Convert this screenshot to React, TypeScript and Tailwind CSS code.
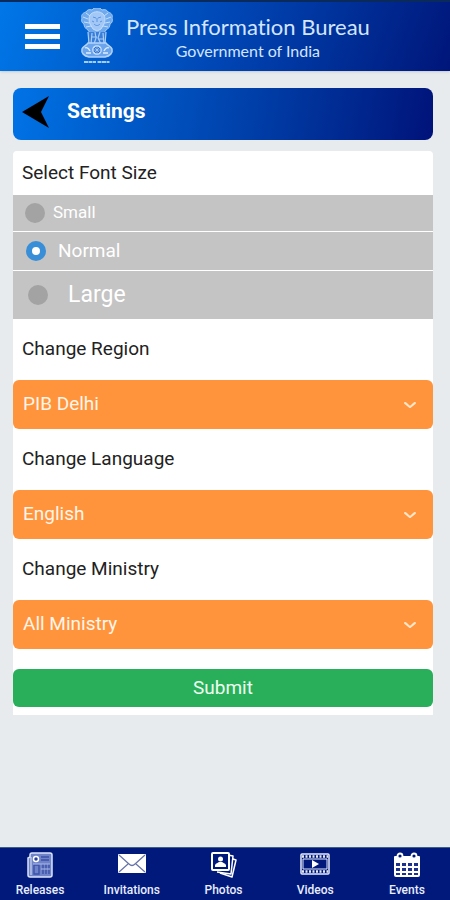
import React, { useState } from 'react';

const FONT_SIZES = [
  { id: 'small', label: 'Small', row: 'h-9 pl-3 gap-2 text-[17px]' },
  { id: 'normal', label: 'Normal', row: 'h-[38px] pl-[13px] gap-3 text-[19px]' },
  { id: 'large', label: 'Large', row: 'h-12 pl-[15px] gap-5 text-[23px]' },
];

const Emblem: React.FC = () => (
  <svg width="34" height="58" viewBox="0 0 34 58" fill="none" aria-hidden="true">
    {/* lions */}
    <path
      d="M12 2c2-3 8-3 10 0 3-1 5 0 6 2 4 1 5 4 4 6 1 3 0 5-2 6 0 3-2 5-4 6l-2 3H10l-2-3c-2-1-4-3-4-6-2-1-3-3-2-6-1-2 0-5 4-6 1-2 3-3 6-2z"
      fill="#6fa9ee"
      stroke="#a5cbf7"
      strokeWidth="1"
    />
    <path
      d="M11 6c3-3 9-3 12 0 3 3 2 7 1 10l-3 5-4 2-4-2-3-5c-1-3-2-7 1-10z"
      fill="#a3c8f6"
      stroke="#c5defb"
      strokeWidth="1"
    />
    <path
      d="M13 9l3 1M21 9l-3 1M17 10v4M14 16c2 2 4 2 6 0M12 13l2 1M22 13l-2 1"
      stroke="#5893e2"
      strokeWidth="1"
    />
    <path
      d="M3 9l5 2M31 9l-5 2M4 14l5 1M30 14l-5 1M6 19l5-1M28 19l-5-1M6 5l4 3M28 5l-4 3"
      stroke="#c5defb"
      strokeWidth="1"
    />
    {/* legs */}
    <path d="M8 24h18v11l2 3H6l2-3z" fill="#397fda" />
    <path
      d="M8 24l1 12M12 25l-1 11M15 24l1 6-2 6M20 24l-2 6 3 6M23 25l1 11M26 24l-1 12M11 29h6M18 31h6"
      stroke="#a9cdf8"
      strokeWidth="1.2"
    />
    {/* abacus with the wheel */}
    <path
      d="M8 35h18c1 2 5 3 6 6 1 4-2 7-7 8H9c-5-1-8-4-7-8 1-3 5-4 6-6z"
      fill="#6ba5ee"
      stroke="#b4d4fa"
      strokeWidth="1.5"
    />
    <circle cx="17" cy="42" r="4.2" fill="#2f72d2" stroke="#d5e7fd" strokeWidth="1.2" />
    <path d="M17 38v8M13 42h8M14 39l6 6M20 39l-6 6" stroke="#c5defb" strokeWidth=".6" />
    <path d="M5 40c2-1 4 1 5 3M29 40c-2-1-4 1-5 3M6 45h5M23 45h5" stroke="#e0edfd" strokeWidth="1.3" />
    <path d="M4 54h26" stroke="#a5cbf7" strokeWidth="2" strokeDasharray="4 .5 4 .5 3 1.5" />
  </svg>
);

const ReleasesIcon: React.FC = () => (
  <svg width="26" height="26" viewBox="0 0 26 26" fill="none" aria-hidden="true">
    <path d="M5 1h18a2 2 0 0 1 2 2v20a2 2 0 0 1-2 2H3a2 2 0 0 1-2-2V6l2-1V3a2 2 0 0 1 2-2z" fill="#6f83c8" stroke="#dce4fa" strokeWidth="1.5" />
    <path d="M4 5v18" stroke="#dce4fa" strokeWidth="1" />
    <circle cx="9" cy="7" r="2.5" fill="#2a409c" stroke="#fff" strokeWidth="1.5" />
    <path d="M14 5h8M14 8h8" stroke="#3d52a8" strokeWidth="1.4" />
    <path d="M7 13h5v9H7zM16 12v10M19 12v10M22 12v10" stroke="#3d52a8" strokeWidth="1.4" />
    <path d="M6 12h17M14 17h9" stroke="#aebbe8" strokeWidth="1" />
  </svg>
);

const InvitationsIcon: React.FC = () => (
  <svg width="28" height="26" viewBox="0 0 28 26" fill="none" aria-hidden="true">
    <rect y="2" width="28" height="19" rx="1" fill="#fff" />
    <path d="M1 3l10 9c2 2 4 2 6 0l10-9M1 20l9-8M27 20l-9-8" stroke="#6672a8" strokeWidth="1.2" />
  </svg>
);

const PhotosIcon: React.FC = () => (
  <svg width="26" height="26" viewBox="0 0 26 26" fill="none" aria-hidden="true">
    <path d="M19 6l6 2-4 17-12-4" fill="#00197b" stroke="#fff" strokeWidth="1.5" strokeLinejoin="round" />
    <path d="M17 3l5 1-2 18-14-2" fill="#00197b" stroke="#fff" strokeWidth="1.5" strokeLinejoin="round" />
    <rect x="1" y="1" width="17" height="17" rx="1" fill="#00197b" stroke="#fff" strokeWidth="2" />
    <circle cx="9.5" cy="7" r="2.5" fill="#fff" />
    <path d="M4 15v-2c1-2 3-2 4-3h3c1 1 3 1 4 3v2z" fill="#fff" />
  </svg>
);

const VideosIcon: React.FC = () => (
  <svg width="30" height="26" viewBox="0 0 30 26" fill="none" aria-hidden="true">
    <rect x="1" y="2" width="28" height="20" rx="1" fill="#00197b" stroke="#e6ebfb" strokeWidth="1.5" />
    <path d="M2 4.5h26M2 19.5h26" stroke="#e6ebfb" strokeWidth="2.5" strokeDasharray="2 1.5" />
    <path d="M3 7h24v10H3z" stroke="#e6ebfb" strokeWidth="1" />
    <path d="M12 8l7 4-7 4z" fill="#fff" />
  </svg>
);

const EventsIcon: React.FC = () => (
  <svg width="28" height="26" viewBox="0 0 28 26" fill="none" aria-hidden="true">
    <path d="M2 4h24a1 1 0 0 1 1 1v18a2 2 0 0 1-2 2H3a2 2 0 0 1-2-2V5a1 1 0 0 1 1-1z" fill="#fff" />
    <path
      d="M3 11h4v3H3zM9 11h4v3H9zM15 11h4v3h-4zM21 11h4v3h-4zM3 16h4v3H3zM9 16h4v3H9zM15 16h4v3h-4zM21 16h4v3h-4zM3 21h4v2H3zM9 21h4v2H9zM15 21h4v2h-4zM21 21h4v2h-4z"
      fill="#1d318f"
    />
    <circle cx="7" cy="4" r="2.5" fill="#00197b" stroke="#fff" strokeWidth="1.8" />
    <circle cx="21" cy="4" r="2.5" fill="#00197b" stroke="#fff" strokeWidth="1.8" />
  </svg>
);

const NAV_ITEMS = [
  { label: 'Releases', icon: <ReleasesIcon /> },
  { label: 'Invitations', icon: <InvitationsIcon /> },
  { label: 'Photos', icon: <PhotosIcon /> },
  { label: 'Videos', icon: <VideosIcon /> },
  { label: 'Events', icon: <EventsIcon /> },
];

interface SelectFieldProps {
  id: string;
  label: string;
  options: string[];
}

const SelectField: React.FC<SelectFieldProps> = ({ id, label, options }) => (
  <div>
    <label htmlFor={id} className="flex h-[61px] items-center px-[9px] text-[19px] text-[#222]">
      {label}
    </label>
    <div className="relative">
      <select
        id={id}
        className="block h-[49px] w-full appearance-none rounded-md bg-[#ff943c] pl-2.5 pr-10 text-[19px] text-[#fff5e8] outline-none"
      >
        {options.map((option) => (
          <option key={option}>{option}</option>
        ))}
      </select>
      <svg
        className="pointer-events-none absolute right-4 top-5"
        width="14"
        height="10"
        viewBox="0 0 14 10"
        fill="none"
        aria-hidden="true"
      >
        <path d="M2 3c2 1 3 3 5 4 2-1 3-3 5-4" stroke="#ffe6c8" strokeWidth="2" strokeLinecap="round" />
      </svg>
    </div>
  </div>
);

const App: React.FC = () => {
  const [fontSize, setFontSize] = useState('normal');

  return (
    <div className="flex min-h-screen flex-col bg-[#e7ebee] font-['Roboto',sans-serif]">
      {/* HEADER */}
      <header className="flex h-[71px] items-center border-t-2 border-[#0b2a5c] bg-linear-110 from-[#0077e8] via-[#0046b5] to-[#00157a] pl-[25px] shadow-sm">
        <button aria-label="Menu" className="flex flex-col gap-[5px]">
          <span className="h-[5px] w-[35px] bg-white" />
          <span className="h-[5px] w-[35px] bg-white" />
          <span className="h-[5px] w-[35px] bg-white" />
        </button>
        <div className="ml-5">
          <Emblem />
        </div>
        <div className="ml-3 pt-1 text-center font-['Lato',sans-serif] text-[#d3e5ff] [font-variant-ligatures:none]">
          <h1 className="text-[22px] leading-6">Press Information Bureau</h1>
          <p className="text-base leading-6">Government of India</p>
        </div>
      </header>

      <main className="flex-1 pl-[13px] pr-[17px] pt-[17px]">
        {/* TITLE BAR */}
        <div className="flex h-[52px] items-center rounded-lg bg-linear-100 from-[#0073e6] via-[#0045b0] to-[#00127a] pb-1 pl-2">
          <button aria-label="Back">
            <svg width="28" height="32" viewBox="0 0 28 32" aria-hidden="true">
              <path d="M1 16L28 0l-8 16 8 16z" fill="#000" />
            </svg>
          </button>
          <h2 className="ml-[18px] text-[21px] font-bold text-white">Settings</h2>
        </div>

        {/* FONT SIZE */}
        <fieldset className="mt-[11px] rounded bg-white">
          <legend className="float-left flex h-11 w-full items-center px-[9px] text-[19px] text-[#222]">
            Select Font Size
          </legend>
          <div className="clear-both flex flex-col gap-px">
            {FONT_SIZES.map((size) => (
              <label key={size.id} className={`flex items-center bg-[#c4c4c4] text-white ${size.row}`}>
                <input
                  type="radio"
                  name="fontSize"
                  value={size.id}
                  checked={fontSize === size.id}
                  onChange={() => setFontSize(size.id)}
                  className="size-5 appearance-none rounded-full bg-[#a3a3a3] checked:border-[6px] checked:border-[#388fd8] checked:bg-white"
                />
                {size.label}
              </label>
            ))}
          </div>
        </fieldset>

        {/* REGION, LANGUAGE, MINISTRY */}
        <form className="bg-white pb-2" onSubmit={(e) => e.preventDefault()}>
          <SelectField id="region" label="Change Region" options={['PIB Delhi']} />
          <SelectField id="language" label="Change Language" options={['English']} />
          <SelectField id="ministry" label="Change Ministry" options={['All Ministry']} />
          <button
            type="submit"
            className="mt-5 h-[38px] w-full rounded-md bg-[#29af5a] text-[19px] text-[#edfff0]"
          >
            Submit
          </button>
        </form>
      </main>

      {/* BOTTOM NAV */}
      <nav className="flex h-[53px] justify-between border-t border-[#3c5f82] bg-[#00197b] pl-3 pr-[15px] pt-1">
        {NAV_ITEMS.map((item) => (
          <a key={item.label} href="#" className="flex w-14 flex-col items-center gap-1 text-xs font-medium text-[#e8edff]">
            {item.icon}
            {item.label}
          </a>
        ))}
      </nav>
    </div>
  );
};

export default App;
